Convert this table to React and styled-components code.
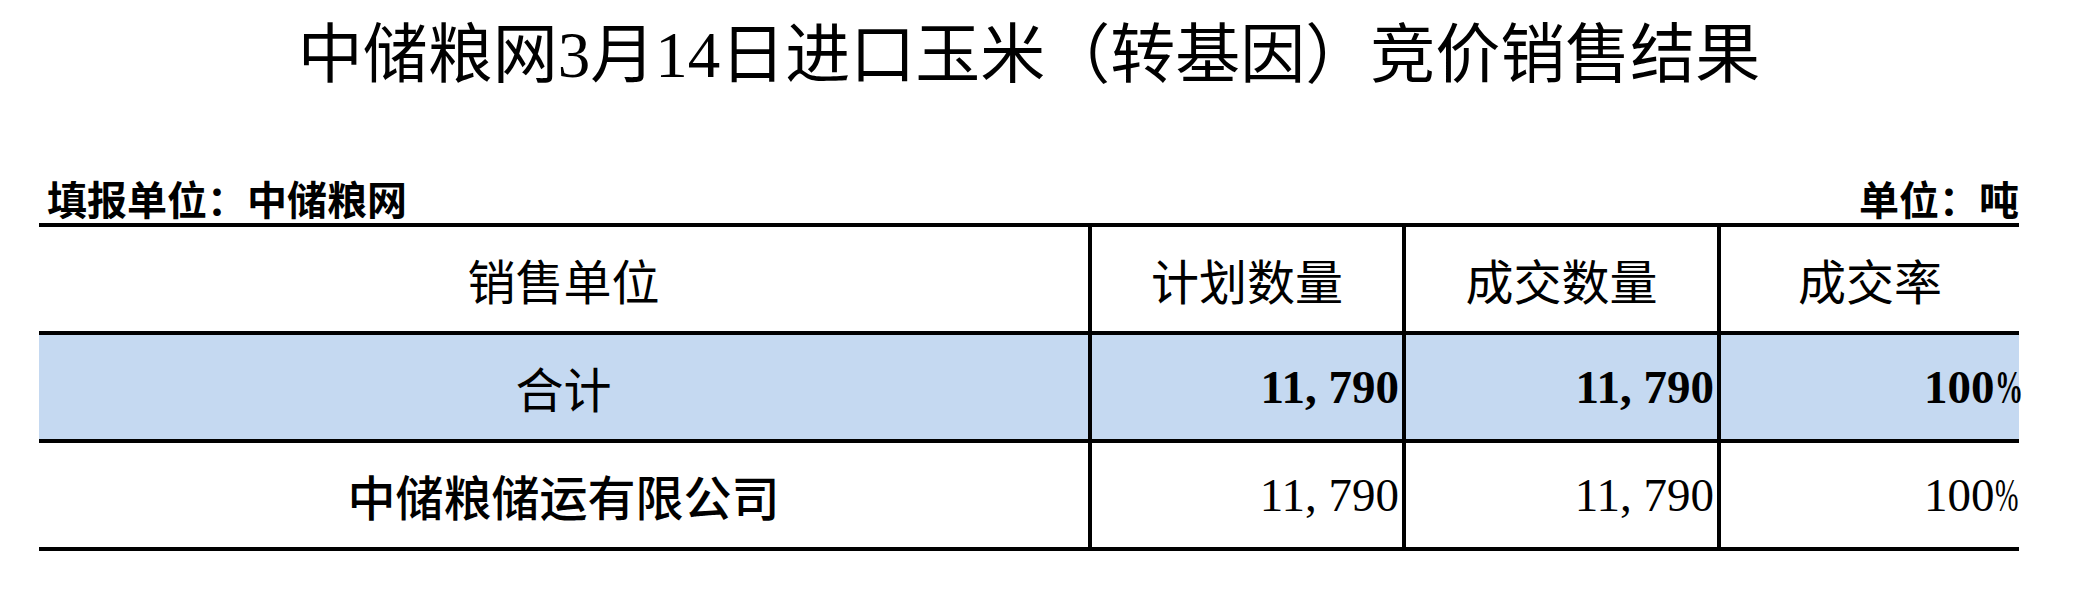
import React from "react";
import styled, { createGlobalStyle } from "styled-components";

const GlobalStyle = createGlobalStyle`
  html, body {
    margin: 0;
    padding: 0;
    background: #ffffff;
  }
  body {
    font-family: "Noto Sans CJK SC", sans-serif;
    color: #000;
  }
`;

const Sheet = styled.div`
  width: 1980px;
  margin-left: 39px;
  padding-top: 23px;
`;

const Title = styled.h1`
  margin: 0;
  font-family: "Liberation Serif", "Noto Sans CJK SC", serif;
  font-size: 65px;
  line-height: 65px;
  font-weight: 400;
  text-align: center;
`;

const SubHeader = styled.div`
  display: flex;
  justify-content: space-between;
  align-items: flex-end;
  margin-top: 90px;
  margin-bottom: 5px;
  padding-left: 8px;
  font-size: 40px;
  line-height: 40px;
  font-weight: 600;
`;

const Table = styled.div`
  border-top: 4px solid #000;
`;

const Row = styled.div`
  display: grid;
  grid-template-columns: 1049px 314px 315px 302px;
  height: 108px;
  box-sizing: border-box;
  border-bottom: 4px solid #000;
  background: ${(p) => (p.$highlight ? "#c5d9f1" : "#ffffff")};
`;

const Cell = styled.div`
  display: flex;
  align-items: center;
  justify-content: ${(p) => (p.$num ? "flex-end" : "center")};
  box-sizing: border-box;
  padding-right: ${(p) => (p.$num ? p.$pad ?? 3 : 0)}px;
  border-left: ${(p) => (p.$first ? "none" : "4px solid #000")};
  font-family: ${(p) =>
    p.$num
      ? `"Liberation Serif", "Noto Sans CJK SC", serif`
      : `"Noto Sans CJK SC", sans-serif`};
  font-size: ${(p) => (p.$num ? 47 : 48)}px;
  line-height: 1;
  font-weight: ${(p) => p.$weight ?? 400};
  white-space: nowrap;
`;

const Comma = styled.span`
  display: inline-block;
  width: 0.5em;
  text-align: left;
`;

const Pct = styled.span`
  display: inline-block;
  width: 0.5em;
  transform: scaleX(0.6);
  transform-origin: left center;
`;

function renderNum(value) {
  return value.split(/(,|%)/).map((part, i) => {
    if (part === ",") return <Comma key={i}>,</Comma>;
    if (part === "%") return <Pct key={i}>%</Pct>;
    return part;
  });
}

const rows = [
  { name: "合计", plan: "11,790", deal: "11,790", rate: "100%", total: true },
  { name: "中储粮储运有限公司", plan: "11,790", deal: "11,790", rate: "100%" },
];

export default function App() {
  return (
    <>
      <GlobalStyle />
      <Sheet>
        <Title>中储粮网3月14日进口玉米（转基因）竞价销售结果</Title>
        <SubHeader>
          <span>填报单位：中储粮网</span>
          <span>单位：吨</span>
        </SubHeader>
        <Table>
          <Row>
            <Cell $first>销售单位</Cell>
            <Cell>计划数量</Cell>
            <Cell>成交数量</Cell>
            <Cell>成交率</Cell>
          </Row>
          {rows.map((r) => (
            <Row key={r.name} $highlight={r.total}>
              <Cell $first $weight={r.total ? 400 : 500}>
                {r.name}
              </Cell>
              <Cell $num $weight={r.total ? 700 : 400}>
                {renderNum(r.plan)}
              </Cell>
              <Cell $num $weight={r.total ? 700 : 400}>
                {renderNum(r.deal)}
              </Cell>
              <Cell $num $pad={1} $weight={r.total ? 700 : 400}>
                {renderNum(r.rate)}
              </Cell>
            </Row>
          ))}
        </Table>
      </Sheet>
    </>
  );
}
